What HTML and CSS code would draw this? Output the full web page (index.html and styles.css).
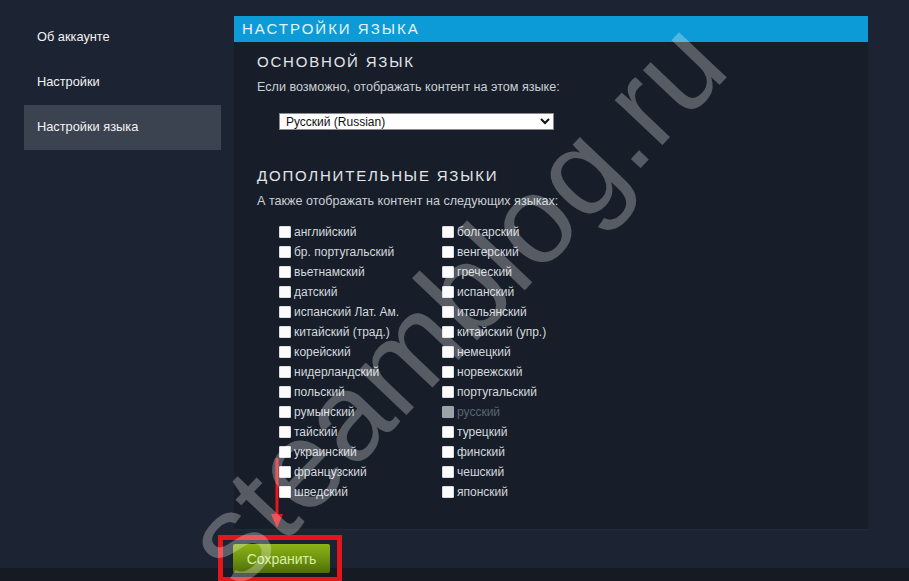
FILE: index.html
```html
<!DOCTYPE html>
<html lang="ru">
<head>
    <meta charset="UTF-8">
    <meta name="viewport" content="width=device-width, initial-scale=1.0">
    <title>Настройки языка</title>
    <link rel="stylesheet" href="styles.css">
</head>
<body>

    <div class="page">
        <nav class="side-nav">
            <a class="nav-item" href="#">Об аккаунте</a>
            <a class="nav-item" href="#">Настройки</a>
            <a class="nav-item active" href="#">Настройки языка</a>
        </nav>

        <main class="content">
            <div class="section-title">Настройки языка</div>
            <div class="panel">
                <h2>Основной язык</h2>
                <p class="hint">Если возможно, отображать контент на этом языке:</p>
                <select class="lang-select">
                    <option>Русский (Russian)</option>
                </select>

                <h2 class="second">Дополнительные языки</h2>
                <p class="hint">А также отображать контент на следующих языках:</p>
                <div class="lang-grid">
                    <label><input type="checkbox"> английский</label>
                    <label><input type="checkbox"> болгарский</label>
                    <label><input type="checkbox"> бр. португальский</label>
                    <label><input type="checkbox"> венгерский</label>
                    <label><input type="checkbox"> вьетнамский</label>
                    <label><input type="checkbox"> греческий</label>
                    <label><input type="checkbox"> датский</label>
                    <label><input type="checkbox"> испанский</label>
                    <label><input type="checkbox"> испанский Лат. Ам.</label>
                    <label><input type="checkbox"> итальянский</label>
                    <label><input type="checkbox"> китайский (трад.)</label>
                    <label><input type="checkbox"> китайский (упр.)</label>
                    <label><input type="checkbox"> корейский</label>
                    <label><input type="checkbox"> немецкий</label>
                    <label><input type="checkbox"> нидерландский</label>
                    <label><input type="checkbox"> норвежский</label>
                    <label><input type="checkbox"> польский</label>
                    <label><input type="checkbox"> португальский</label>
                    <label><input type="checkbox"> румынский</label>
                    <label class="disabled"><input type="checkbox" disabled> русский</label>
                    <label><input type="checkbox"> тайский</label>
                    <label><input type="checkbox"> турецкий</label>
                    <label><input type="checkbox"> украинский</label>
                    <label><input type="checkbox"> финский</label>
                    <label><input type="checkbox"> французский</label>
                    <label><input type="checkbox"> чешский</label>
                    <label><input type="checkbox"> шведский</label>
                    <label><input type="checkbox"> японский</label>
                </div>
            </div>

            <div class="actions">
                <div class="highlight">
                    <button type="button" class="btn-save">Сохранить</button>
                </div>
            </div>
        </main>
    </div>

    <!-- annotation arrow pointing at the save button -->
    <svg class="arrow" width="14" height="72" viewBox="0 0 14 72">
        <rect x="5.5" y="0" width="3" height="58" fill="#e3161c"/>
        <polygon points="1,56 13,56 7,70" fill="#e3161c"/>
    </svg>

    <div class="watermark">steamblog.ru</div>

</body>
</html>
```

FILE: styles.css
```css
body {
    font-family: Arial, "Liberation Sans", sans-serif;
    background: linear-gradient(to bottom, #1c2333 0, #1c2333 568px, #161a22 568px);
    margin: 0;
    padding: 0;
    min-height: 581px;
    overflow: hidden;
}

.page {
    display: flex;
    padding: 15px 0 0 24px;
}

.side-nav {
    width: 197px;
    display: flex;
    flex-direction: column;
}

.nav-item {
    display: block;
    height: 45px;
    line-height: 44px;
    padding-left: 13px;
    font-size: 12.8px;
    color: #f2f2f2;
    text-decoration: none;
}

.nav-item.active {
    background-color: #3b4351;
}

.content {
    width: 634px;
    margin-left: 13px;
    padding-top: 1px;
}

.section-title {
    height: 26px;
    line-height: 26px;
    padding-left: 8px;
    background-color: #0d9bd7;
    color: #e4f3fb;
    font-size: 15px;
    letter-spacing: 2px;
    text-transform: uppercase;
}

.panel {
    background-color: #171e29;
    padding: 10px 23px 27px;
    border-bottom: 1px solid #222a38;
}

h2 {
    margin: 0;
    font-size: 15px;
    font-weight: normal;
    line-height: 20px;
    letter-spacing: 1.8px;
    text-transform: uppercase;
    color: #e2e6ea;
}

h2.second {
    margin-top: 36px;
}

.hint {
    margin: 7px 0 0;
    font-size: 12.6px;
    line-height: 16px;
    color: #c9cfd5;
}

.lang-select {
    display: block;
    margin: 18px 0 0 22px;
    width: 275px;
    height: 17px;
    padding: 0 0 0 2px;
    font-family: Arial, "Liberation Sans", sans-serif;
    font-size: 12px;
    color: #111;
    background-color: #fff;
    border: 1px solid #8a8a8a;
    border-radius: 0;
}

.lang-grid {
    display: grid;
    grid-template-columns: 163px 1fr;
    margin: 13px 0 0 22px;
}

.lang-grid label {
    display: flex;
    align-items: center;
    height: 20px;
    font-size: 12px;
    color: #d3d9de;
}

.lang-grid input {
    appearance: none;
    -webkit-appearance: none;
    width: 12px;
    height: 12px;
    margin: 0 3px 0 0;
    background-color: #fbfbfb;
    border: 1px solid #dcdcdc;
    border-radius: 1px;
}

.lang-grid label.disabled {
    color: #5b6571;
}

.lang-grid label.disabled input {
    background-color: #9ea3a9;
    border-color: #9ea3a9;
}

.actions {
    margin: 5px 0 0 -16px;
}

.highlight {
    display: inline-block;
    border: 5px solid #e3161c;
    padding: 4px 7px 4px 10px;
}

.btn-save {
    display: block;
    width: 97px;
    height: 29px;
    padding: 0;
    border: none;
    border-radius: 2px;
    background: linear-gradient(to bottom, #8cb416 0%, #6f9410 50%, #4f6d09 100%);
    color: #d9efa6;
    font-family: Arial, "Liberation Sans", sans-serif;
    font-size: 14px;
    cursor: pointer;
}

.arrow {
    position: absolute;
    left: 270px;
    top: 458px;
}

.watermark {
    position: absolute;
    left: 455px;
    top: 302px;
    transform: translate(-50%, -50%) rotate(-46.5deg);
    font-family: "Liberation Sans", Arial, sans-serif;
    font-size: 124px;
    line-height: 0.8;
    white-space: nowrap;
    color: rgba(255, 255, 255, 0.28);
    pointer-events: none;
}
```
